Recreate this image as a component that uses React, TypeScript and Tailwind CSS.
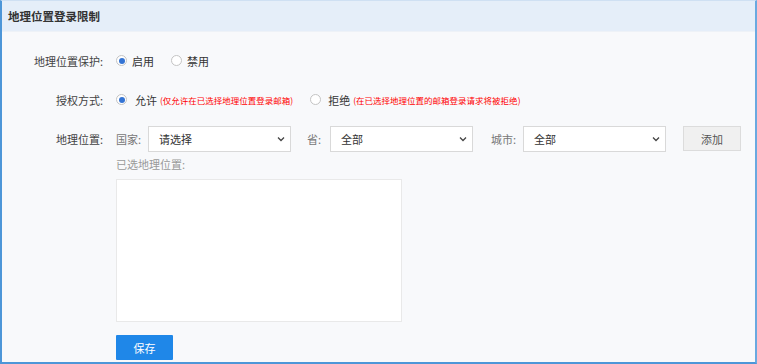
import React from "react";

const font = { fontFamily: '"Noto Sans CJK SC", "Noto Sans", sans-serif' };

function Radio({ checked }: { checked?: boolean }) {
  return (
    <span className="w-[11px] h-[11px] rounded-full border border-[#c4c4c4] bg-white flex items-center justify-center shrink-0">
      {checked && <span className="w-[6px] h-[6px] rounded-full bg-[#3474d4]" />}
    </span>
  );
}

function Select({ text }: { text: string }) {
  return (
    <div className="w-[143px] h-[26px] border border-[#d9d9d9] bg-white flex items-center justify-between pl-[10px] pr-[5px] text-[#333]">
      <span>{text}</span>
      <svg width="8" height="6" viewBox="0 0 8 6" className="mt-[1px]">
        <path d="M1 1.5 L4 4.5 L7 1.5" fill="none" stroke="#444" strokeWidth="1.3" />
      </svg>
    </div>
  );
}

export default function App() {
  return (
    <div
      className="w-[757px] h-[364px] flex flex-col border-l-2 border-r-2 border-b-2 border-t border-l-[#4d96d8] border-r-[#6aa9e0] border-b-[#4d96d8] border-t-[#cfe0f3] bg-[#f8f9fb] text-[11px] leading-[14px] text-[#333] overflow-hidden"
      style={font}
    >
      <div className="h-[31px] bg-[#e5eef9] flex items-center px-[6px] text-[11.5px] font-bold text-[#333] border-b border-[#eef2f7]">
        地理位置登录限制
      </div>
      <div className="flex flex-col pt-[9px]">
        <div className="h-[39px] flex items-center">
          <div className="w-[101px] text-right text-[#444]">地理位置保护:</div>
          <div className="ml-[13px] flex items-center">
            <Radio checked />
            <span className="ml-[5px]">启用</span>
            <span className="ml-[17px]"><Radio /></span>
            <span className="ml-[5px]">禁用</span>
          </div>
        </div>
        <div className="h-[39px] flex items-center">
          <div className="w-[101px] text-right text-[#444]">授权方式:</div>
          <div className="ml-[13px] flex items-center">
            <Radio checked />
            <span className="ml-[8px]">允许</span>
            <span className="ml-[3px] text-[8.5px] text-[#f00]">(仅允许在已选择地理位置登录邮箱)</span>
            <span className="ml-[17px]"><Radio /></span>
            <span className="ml-[7px]">拒绝</span>
            <span className="ml-[3px] text-[8.5px] text-[#f00]">(在已选择地理位置的邮箱登录请求将被拒绝)</span>
          </div>
        </div>
        <div className="h-[39px] flex items-center">
          <div className="w-[101px] text-right text-[#444]">地理位置:</div>
          <div className="ml-[13px] flex items-center">
            <span className="w-[32px] text-[#777]">国家:</span>
            <Select text="请选择" />
            <span className="ml-[16px] w-[23px] text-[#777]">省:</span>
            <Select text="全部" />
            <span className="ml-[18px] w-[32px] text-[#777]">城市:</span>
            <Select text="全部" />
            <button className="ml-[17px] w-[58px] h-[25px] bg-[#f0f0f0] border border-[#dcdcdc] text-[#555]">
              添加
            </button>
          </div>
        </div>
        <div className="ml-[114px] flex flex-col">
          <div className="mt-[-1px] text-[#999]">已选地理位置:</div>
          <div className="mt-[8px] w-[286px] h-[143px] bg-white border border-[#e9e9e9]" />
          <button className="mt-[13px] w-[57px] h-[25px] bg-[#1f87e8] text-white rounded-[1px]">保存</button>
        </div>
      </div>
    </div>
  );
}
